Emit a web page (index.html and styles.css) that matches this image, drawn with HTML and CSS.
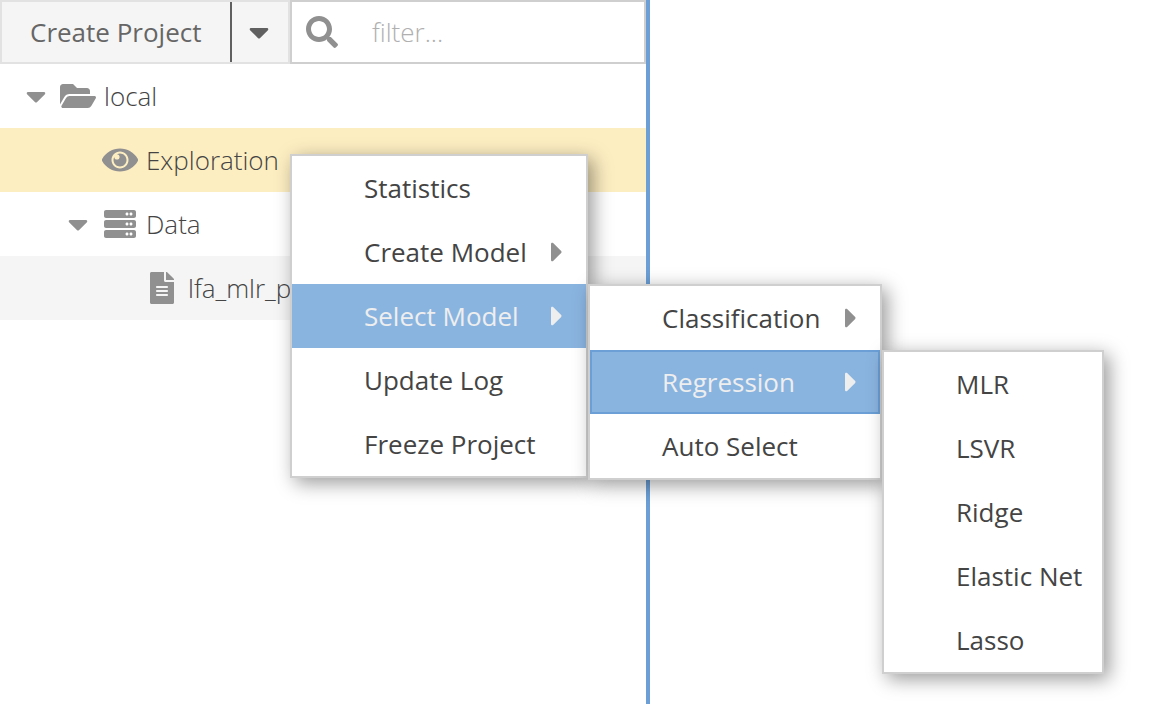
FILE: index.html
```
<!DOCTYPE html>
<html lang="en">
<head>
<meta charset="utf-8">
<title>Projects</title>
<link rel="stylesheet" href="styles.css">
</head>
<body>
<svg class="defs" width="0" height="0" aria-hidden="true">
  <symbol id="caret-down" viewBox="0 0 320 512"><path d="M31.3 192h257.3c17.8 0 26.7 21.5 14.1 34.1L174.1 354.7c-7.8 7.8-20.5 7.8-28.3 0L17.2 226.1C4.6 213.5 13.5 192 31.3 192z"/></symbol>
  <symbol id="caret-right" viewBox="0 0 192 512"><path d="M0 384.662V127.338c0-17.818 21.543-26.741 34.142-14.142l128.662 128.662c7.81 7.81 7.81 20.474 0 28.284L34.142 398.804C21.543 411.404 0 402.48 0 384.662z"/></symbol>
</svg>
<main class="app">
  <aside class="sidebar">
    <header class="toolbar">
      <div class="split-button">
        <button class="create">Create Project</button>
        <button class="toggle" aria-label="More"><svg class="caret"><use href="#caret-down"/></svg></button>
      </div>
      <label class="filter">
        <svg class="search" viewBox="0 0 512 512"><path d="M505 442.7L405.3 343c-4.5-4.5-10.6-7-17-7H372c27.6-35.3 44-79.7 44-128C416 93.1 322.9 0 208 0S0 93.1 0 208s93.1 208 208 208c48.3 0 92.7-16.4 128-44v16.3c0 6.4 2.5 12.5 7 17l99.7 99.7c9.4 9.4 24.6 9.4 33.9 0l28.3-28.3c9.4-9.4 9.4-24.6.1-34zM208 336c-70.7 0-128-57.2-128-128 0-70.7 57.2-128 128-128 70.7 0 128 57.2 128 128 0 70.7-57.2 128-128 128z"/></svg>
        <span class="placeholder">filter...</span>
      </label>
    </header>
    <div class="tree">
      <div class="node">
        <svg class="caret"><use href="#caret-down"/></svg>
        <span class="icon"><svg width="36" height="32" viewBox="0 0 576 512"><path d="M572.694 292.093L500.27 416.248A63.997 63.997 0 0 1 444.989 448H45.025c-18.523 0-30.064-20.093-20.731-36.093l72.424-124.155A64 64 0 0 1 152 256h399.964c18.523 0 30.064 20.093 20.73 36.093zM152 224h328v-48c0-26.51-21.49-48-48-48H272l-64-64H48C21.49 64 0 85.49 0 112v278.046l69.077-118.418C86.214 242.25 117.989 224 152 224z"/></svg></span>
        <span class="label">local</span>
      </div>
      <div class="node level-1 selected">
        <span class="caret"></span>
        <span class="icon"><svg width="36" height="32" viewBox="0 0 576 512"><path d="M569.354 231.631C512.969 135.949 407.81 72 288 72 168.14 72 63.004 135.994 6.646 231.631a47.999 47.999 0 0 0 0 48.739C63.031 376.051 168.19 440 288 440c119.86 0 224.996-63.994 281.354-159.631a47.997 47.997 0 0 0 0-48.738zM288 392c-75.162 0-136-60.827-136-136 0-75.162 60.826-136 136-136 75.162 0 136 60.826 136 136 0 75.162-60.826 136-136 136zm104-136c0 57.438-46.562 104-104 104s-104-46.562-104-104c0-17.708 4.431-34.379 12.236-48.973l-.001.032c0 23.651 19.173 42.823 42.824 42.823s42.824-19.173 42.824-42.823c0-23.651-19.173-42.824-42.824-42.824l-.032.001C253.621 156.431 270.292 152 288 152c57.438 0 104 46.562 104 104z"/></svg></span>
        <span class="label">Exploration</span>
      </div>
      <div class="node level-1">
        <svg class="caret"><use href="#caret-down"/></svg>
        <span class="icon"><svg width="32" height="32" viewBox="0 0 512 512"><path id="bay" d="M480 160H32c-17.673 0-32-14.327-32-32V64c0-17.673 14.327-32 32-32h448c17.673 0 32 14.327 32 32v64c0 17.673-14.327 32-32 32zm-48-88c-13.255 0-24 10.745-24 24s10.745 24 24 24 24-10.745 24-24-10.745-24-24-24zm-64 0c-13.255 0-24 10.745-24 24s10.745 24 24 24 24-10.745 24-24-10.745-24-24-24z"/><use href="#bay" y="160"/><use href="#bay" y="320"/></svg></span>
        <span class="label">Data</span>
      </div>
      <div class="node level-2 hovered">
        <span class="caret"></span>
        <span class="icon"><svg width="24" height="32" viewBox="0 0 384 512"><path d="M224 136V0H24C10.7 0 0 10.7 0 24v464c0 13.3 10.7 24 24 24h336c13.3 0 24-10.7 24-24V160H248c-13.2 0-24-10.8-24-24zm64 236c0 6.6-5.4 12-12 12H108c-6.6 0-12-5.4-12-12v-8c0-6.6 5.4-12 12-12h168c6.6 0 12 5.4 12 12v8zm0-64c0 6.6-5.4 12-12 12H108c-6.6 0-12-5.4-12-12v-8c0-6.6 5.4-12 12-12h168c6.6 0 12 5.4 12 12v8zm0-72v8c0 6.6-5.4 12-12 12H108c-6.6 0-12-5.4-12-12v-8c0-6.6 5.4-12 12-12h168c6.6 0 12 5.4 12 12zm96-114.1v6.1H256V0h6.1c6.4 0 12.5 2.5 17 7l97.9 98c4.5 4.5 7 10.6 7 16.9z"/></svg></span>
        <span class="label">lfa_mlr_p</span>
      </div>
    </div>
  </aside>
  <section class="content"></section>
</main>

<div class="menu context-menu">
  <div class="item">Statistics</div>
  <div class="item">Create Model<svg class="arrow"><use href="#caret-right"/></svg></div>
  <div class="item active">Select Model<svg class="arrow"><use href="#caret-right"/></svg></div>
  <div class="item">Update Log</div>
  <div class="item">Freeze Project</div>
</div>
<div class="menu select-menu">
  <div class="item">Classification<svg class="arrow"><use href="#caret-right"/></svg></div>
  <div class="item active focused">Regression<svg class="arrow"><use href="#caret-right"/></svg></div>
  <div class="item">Auto Select</div>
</div>
<div class="menu regression-menu">
  <div class="item">MLR</div>
  <div class="item">LSVR</div>
  <div class="item">Ridge</div>
  <div class="item">Elastic Net</div>
  <div class="item">Lasso</div>
</div>
</body>
</html>
```
FILE: styles.css
```
* { box-sizing: border-box; }

body {
  margin: 0;
  height: 704px;
  overflow: hidden;
  background: #fff;
  color: #444;
  font: 400 26px/64px "Open Sans", "Noto Sans", sans-serif;
}

svg { display: block; fill: #909090; }
.defs { position: absolute; }

.app { display: flex; height: 704px; }
.sidebar { width: 650px; border-right: 4px solid #6b9fd6; }
.content { flex: 1; }

.toolbar { display: flex; height: 64px; }
.split-button {
  display: flex;
  width: 290px;
  border: 2px solid #e2e2e2;
  background: #f5f5f5;
}
.split-button button {
  display: flex;
  align-items: center;
  padding: 0;
  border: 0;
  background: none;
  color: #666;
  font: inherit;
  line-height: 60px;
}
.split-button .create {
  width: 230px;
  padding-left: 28px;
  border-right: 2px solid #606060;
}
.split-button .toggle { flex: 1; padding-left: 17px; }
.toggle .caret { fill: #606060; }

.filter {
  display: flex;
  flex: 1;
  align-items: center;
  gap: 34px;
  padding-left: 14px;
  border: 2px solid #cfcfcf;
}
.search { width: 32px; height: 32px; }
.placeholder { color: #b0b0b0; font-weight: 300; line-height: 60px; }

.caret { flex: none; width: 20px; height: 32px; }

.node {
  display: flex;
  align-items: center;
  height: 64px;
  padding-left: 26px;
  font-weight: 300;
}
.level-1 { padding-left: 68px; }
.level-2 { padding-left: 110px; }
.selected { background: #fdeec2; }
.hovered { background: #f5f5f5; }
.icon {
  display: flex;
  justify-content: center;
  width: 36px;
  margin: 0 8px 0 14px;
}

.menu {
  position: absolute;
  border: 2px solid #cfcfcf;
  background: #fff;
  box-shadow: 5px 5px 18px rgba(0, 0, 0, .4);
}
.context-menu { left: 290px; top: 154px; width: 298px; }
.select-menu { left: 588px; top: 284px; width: 294px; }
.regression-menu { left: 882px; top: 350px; width: 222px; }

.item {
  display: flex;
  align-items: center;
  justify-content: space-between;
  height: 64px;
  padding: 0 23px 0 72px;
}
.regression-menu .item { white-space: nowrap; padding-right: 0; }
.arrow { width: 12px; height: 32px; }
.active { background: #8ab4e0; color: #eee; }
.active .arrow { fill: #eee; }
.focused { box-shadow: inset 0 0 0 2px #6b9fd6; }
.select-menu .item { padding-right: 23.5px; }
```
